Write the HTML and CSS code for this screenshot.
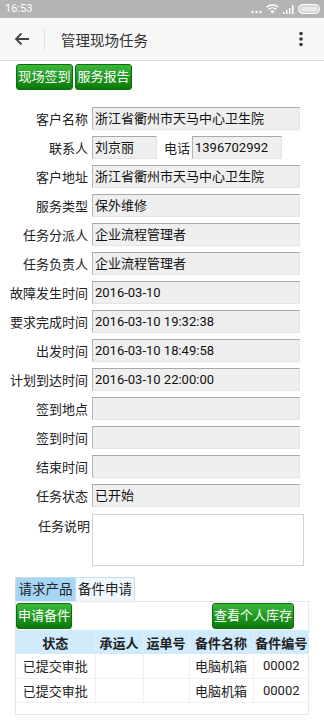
FILE: index.html
```html
<!DOCTYPE html>
<html lang="zh">
<head>
<meta charset="utf-8">
<title>管理现场任务</title>
<link rel="stylesheet" href="styles.css">
</head>
<body>
<div class="statusbar">
  <span class="time">16:53</span>
  <div class="sys-icons">
    <svg class="ico-dots" width="11" height="4" viewBox="0 0 11 4"><circle cx="1.5" cy="2" r="1.2" fill="#fff"/><circle cx="5.5" cy="2" r="1.2" fill="#fff"/><circle cx="9.5" cy="2" r="1.2" fill="#fff"/></svg>
    <svg class="ico-wifi" width="13" height="10" viewBox="0 0 13 10"><path d="M0.5 3.3 A9 9 0 0 1 12.5 3.3" fill="none" stroke="#fff" stroke-width="1.3"/><path d="M2.5 5.4 A6 6 0 0 1 10.5 5.4" fill="none" stroke="#fff" stroke-width="1.3"/><path d="M4.4 7.4 A3 3 0 0 1 8.6 7.4 L6.5 9.6 Z" fill="#fff"/></svg>
    <svg class="ico-signal" width="11" height="9" viewBox="0 0 11 9"><rect x="0" y="7" width="1.5" height="2" fill="#fff"/><rect x="3" y="5" width="1.5" height="4" fill="#fff"/><rect x="6" y="3" width="1.5" height="6" fill="#fff"/><rect x="9" y="0" width="1.5" height="9" fill="#fff"/></svg>
    <svg class="ico-batt" width="22" height="10" viewBox="0 0 22 10"><rect x="0.7" y="0.7" width="20.6" height="8.6" rx="4.3" fill="#c9c9c9" stroke="#fff" stroke-width="1.2"/><rect x="2.5" y="2.5" width="17" height="5" rx="2.5" fill="#e9e9e9"/></svg>
  </div>
</div>

<header class="appbar">
  <svg class="back" width="16" height="14" viewBox="0 0 16 14"><path d="M15 7 H2 M7.5 1.5 L2 7 L7.5 12.5" fill="none" stroke="#444" stroke-width="1.8"/></svg>
  <span class="divider"></span>
  <h1 class="title">管理现场任务</h1>
  <svg class="more" width="6" height="16" viewBox="0 0 6 16"><circle cx="3" cy="2.5" r="1.8" fill="#3a3a3a"/><circle cx="3" cy="8" r="1.8" fill="#3a3a3a"/><circle cx="3" cy="13.5" r="1.8" fill="#3a3a3a"/></svg>
</header>

<div class="actions">
  <button class="gbtn">现场签到</button>
  <button class="gbtn">服务报告</button>
</div>

<form class="form">
  <div class="row"><span class="lbl">客户名称</span><span class="field">浙江省衢州市天马中心卫生院</span></div>
  <div class="row"><span class="lbl">联系人</span>
    <div class="pair"><span class="field short">刘京丽</span><span class="lbl2">电话</span><span class="field phone">1396702992</span></div>
  </div>
  <div class="row"><span class="lbl">客户地址</span><span class="field">浙江省衢州市天马中心卫生院</span></div>
  <div class="row"><span class="lbl">服务类型</span><span class="field">保外维修</span></div>
  <div class="row"><span class="lbl">任务分派人</span><span class="field">企业流程管理者</span></div>
  <div class="row"><span class="lbl">任务负责人</span><span class="field">企业流程管理者</span></div>
  <div class="row"><span class="lbl">故障发生时间</span><span class="field">2016-03-10</span></div>
  <div class="row"><span class="lbl">要求完成时间</span><span class="field">2016-03-10 19:32:38</span></div>
  <div class="row"><span class="lbl">出发时间</span><span class="field">2016-03-10 18:49:58</span></div>
  <div class="row"><span class="lbl">计划到达时间</span><span class="field">2016-03-10 22:00:00</span></div>
  <div class="row"><span class="lbl">签到地点</span><span class="field"></span></div>
  <div class="row"><span class="lbl">签到时间</span><span class="field"></span></div>
  <div class="row"><span class="lbl">结束时间</span><span class="field"></span></div>
  <div class="row"><span class="lbl">任务状态</span><span class="field">已开始</span></div>
  <div class="row tall"><span class="lbl">任务说明</span><span class="area"></span></div>
</form>

<section class="tabs-wrap">
  <div class="tabs">
    <span class="tab active">请求产品</span>
    <span class="tab">备件申请</span>
  </div>
  <div class="panel">
    <div class="panel-actions">
      <button class="gbtn">申请备件</button>
      <button class="gbtn">查看个人库存</button>
    </div>
    <table class="grid">
      <colgroup><col class="c1"><col class="c2"><col class="c3"><col class="c4"><col class="c5"></colgroup>
      <thead><tr><th>状态</th><th>承运人</th><th>运单号</th><th>备件名称</th><th>备件编号</th></tr></thead>
      <tbody>
        <tr><td>已提交审批</td><td></td><td></td><td>电脑机箱</td><td>00002</td></tr>
        <tr><td>已提交审批</td><td></td><td></td><td>电脑机箱</td><td>00002</td></tr>
      </tbody>
    </table>
    <div class="grid-foot"></div>
  </div>
</section>
</body>
</html>
```

FILE: styles.css
```css
* { box-sizing: border-box; }
html, body { margin: 0; padding: 0; background: #fff; }
body {
  width: 324px;
  font-family: Roboto, "Noto Sans CJK SC", sans-serif;
  font-size: 13px;
  color: #222;
}

.statusbar {
  height: 18px;
  background: #b4b4b4;
  display: flex;
  align-items: center;
  justify-content: space-between;
  padding: 0 4px 0 5px;
}
.time { color: #fff; font-size: 11px; line-height: 18px; }
.sys-icons { display: flex; align-items: center; gap: 4px; }
.ico-dots { margin-top: 5px; }

.appbar {
  height: 43px;
  background: #f7f7f7;
  border-bottom: 1px solid #dedede;
  display: flex;
  align-items: center;
  padding-left: 14px;
}
.back { flex: none; }
.divider { width: 1px; height: 22px; background: #e2e2e2; margin-left: 14px; }
.title {
  flex: 1;
  margin: 0 0 0 16px;
  font-size: 14.5px;
  font-weight: normal;
  color: #333;
}
.more { margin-right: 20px; }

.actions { display: flex; gap: 2px; padding: 3px 0 0 16px; }
.gbtn {
  height: 26px;
  padding: 0 1px;
  border: 1px solid #0b6e0b;
  border-radius: 3px;
  background: linear-gradient(#3bb83b, #0a7a0a);
  color: #fff;
  font-family: Roboto, "Noto Sans CJK SC", sans-serif;
  font-size: 13px;
  line-height: 24px;
  white-space: nowrap;
  cursor: pointer;
}
.actions .gbtn { width: 57px; }

.form { display: flex; flex-direction: column; gap: 6px; padding: 17px 0 0 0; }
.row { display: grid; grid-template-columns: 88px 208px; column-gap: 4px; align-items: center; }
.lbl { text-align: right; white-space: nowrap; color: #222; }
.field {
  height: 23px;
  background: #efefef;
  border-top: 1px solid #a9a9a9;
  border-left: 1px solid #b5b5b5;
  border-right: 1px solid #e4e4e4;
  border-bottom: 1px solid #e4e4e4;
  padding-left: 2px;
  line-height: 21px;
  color: #111;
  white-space: nowrap;
  overflow: hidden;
}
.pair { display: flex; align-items: center; }
.field.short { width: 65px; }
.lbl2 { margin-left: 7px; width: 28px; }
.field.phone { width: 90px; }
.row.tall { align-items: start; margin-top: 1px; grid-template-columns: 90px 212px; column-gap: 2px; }
.row.tall .lbl { padding-top: 2px; }
.area { height: 52px; background: #fff; border: 1px solid #d2d2d2; }

.tabs-wrap { padding: 11px 0 0 15px; width: 309px; }
.tabs { display: flex; }
.tab {
  width: 60px;
  height: 24px;
  line-height: 23px;
  text-align: center;
  font-size: 13.5px;
  background: #f0f8fe;
  border: 1px solid #c8dcea;
  border-bottom: none;
  color: #222;
}
.tab.active { background: #a5d6f6; border-right: none; }

.panel { border: 1px solid #e4e8ec; }
.panel-actions { display: flex; justify-content: space-between; padding: 1px 14px 0 0; height: 28px; }
.panel-actions .gbtn { height: 26px; }
.grid { width: 100%; border-collapse: collapse; table-layout: fixed; }
.c1 { width: 79px; } .c2 { width: 48px; } .c3 { width: 46px; } .c4 { width: 64px; } .c5 { width: 56px; }
.grid th {
  height: 24px;
  background: #cfebfc;
  font-weight: bold;
  font-size: 13px;
  border-right: 1px solid #e6eef5;
  white-space: nowrap;
  padding: 0;
  color: #222;
}
.grid td {
  height: 24px;
  text-align: center;
  border-right: 1px solid #edf1f6;
  border-bottom: 1px solid #edf1f6;
  padding: 0;
  white-space: nowrap;
  color: #222;
}
.grid th:last-child, .grid td:last-child { border-right: none; }
.grid-foot { height: 11px; }
```
